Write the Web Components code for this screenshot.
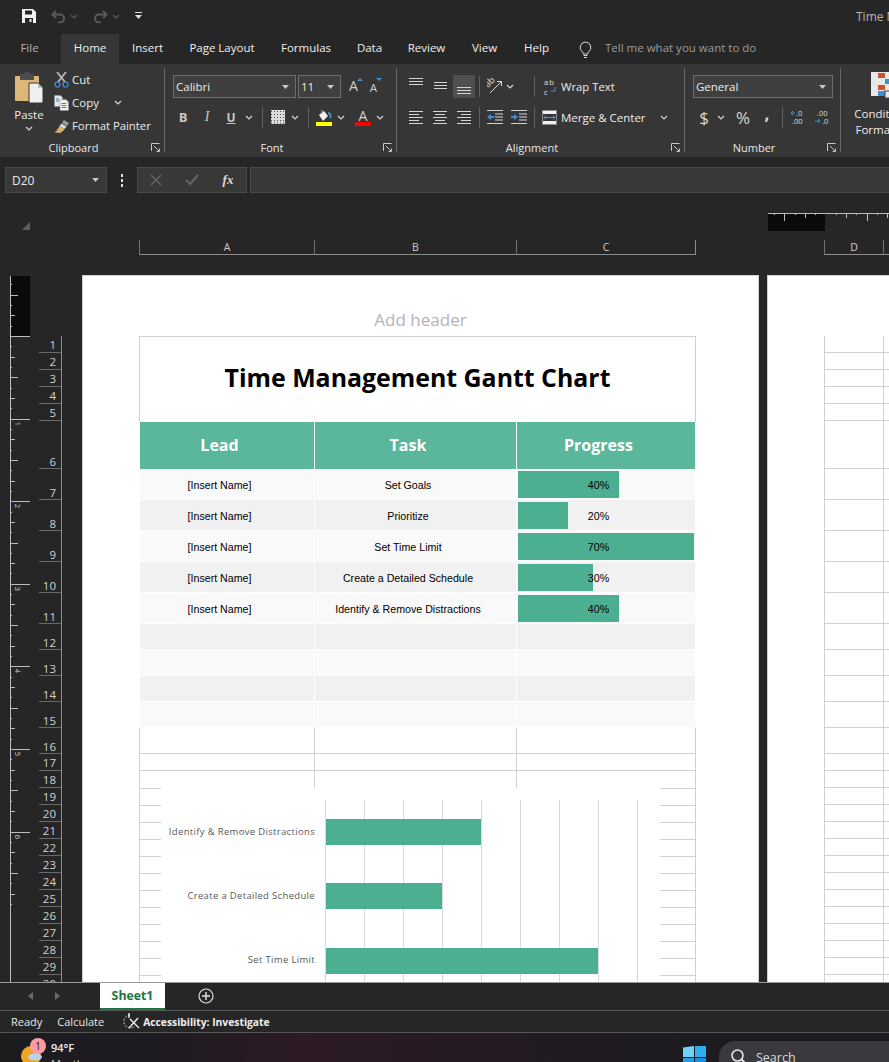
<!DOCTYPE html>
<html>
<head>
<meta charset="utf-8">
<title>Time Management Gantt Chart</title>
<style>
html, body { margin: 0; padding: 0; background: #262626; }
body { width: 889px; height: 1062px; overflow: hidden; display: flex; flex-direction: column; font-family: "Open Sans", "Liberation Sans", sans-serif; }
</style>
</head>
<body>
<x-titlebar></x-titlebar>
<x-tabs></x-tabs>
<x-ribbon></x-ribbon>
<x-formula-bar></x-formula-bar>
<x-workspace></x-workspace>
<x-sheet-tabs></x-sheet-tabs>
<x-status-bar></x-status-bar>
<x-taskbar></x-taskbar>

<script>
// row heights of the sheet, row 1 onwards
const ROWS = [17,17,17,17,17,48,31,31,31,31,31,26,26,26,26,26,17,17].concat(new Array(14).fill(17));

const line = (x1, y1, x2, y2, c, w) => `<line x1="${x1}" y1="${y1}" x2="${x2}" y2="${y2}" stroke="${c || '#d4d4d4'}" stroke-width="${w || 1}"/>`;
const lines3 = (ys, spans) => ys.map((y, i) => line(spans[i][0], y + .5, spans[i][1], y + .5)).join('');

const ICONS = {
  save: [16,16,`<path d="M1 1h11l3 3v11H1z" fill="#f2f2f2"/><rect x="4" y="2.5" width="7" height="4" fill="#262626"/><rect x="4" y="10" width="8" height="5" fill="#262626"/><rect x="8.5" y="11" width="2" height="3" fill="#f2f2f2"/>`],
  undo: [15,13,`<path d="M5 1 1.5 4.5 5 8M2 4.5h7a4 4 0 0 1 0 8H7" fill="none" stroke="#5a5a5a" stroke-width="2"/>`],
  redo: [15,13,`<path d="M10 1l3.500 3.500L10 8M13 4.500H6a4 4 0 0 0 0 8h2" fill="none" stroke="#5a5a5a" stroke-width="2"/>`],
  chev: [8,5,`<path d="M1 1l3 3 3-3" fill="none" stroke="#d6d6d6" stroke-width="1.2"/>`],
  chevdim: [8,5,`<path d="M1 1l3 3 3-3" fill="none" stroke="#5a5a5a" stroke-width="1.2"/>`],
  qat: [7,8,`<rect y="0" width="7" height="1" fill="#ddd"/><path d="M0 3h7L3.500 7z" fill="#ddd"/>`],
  down: [7,4,`<path d="M0 0h7L3.500 4z" fill="#c8c8c8"/>`],
  bulb: [13,17,`<path d="M6.500 1a5.500 5.500 0 0 0-3 10c.6.500.8 1.300.8 2h4.400c0-.7.2-1.500.8-2a5.500 5.500 0 0 0-3-10z" fill="none" stroke="#d6d6d6"/><path d="M4.500 14.500h4M5 16.500h3" stroke="#d6d6d6"/>`],
  paste: [28,31,`<rect x="0" y="4" width="24" height="25" rx="1" fill="#dbb878"/><rect x="5" y="2" width="14" height="6" fill="#4c4c4c"/><rect x="9.500" y="0" width="5" height="4" rx="1" fill="#4c4c4c"/><path d="M14 11h9l5 5v15H14z" fill="#f0f0f0" stroke="#363636"/><path d="M23 11v5h5" fill="#bdbdbd"/>`],
  cut: [15,16,`<path d="M3 0l8 10M12 0L4 10" stroke="#b8b8b8" stroke-width="1.800"/><circle cx="3.500" cy="12.500" r="2.500" fill="none" stroke="#4a90d9" stroke-width="1.200"/><circle cx="11.500" cy="12.500" r="2.500" fill="none" stroke="#4a90d9" stroke-width="1.200"/>`],
  copy: [15,16,`<path d="M.5.500h6l2 2v9h-8z" fill="#e6e6e6" stroke="#999" stroke-width=".5"/><path d="M6 4.500h6l2.500 2.500v8.500H6z" fill="#f4f4f4" stroke="#888" stroke-width=".5"/><path d="M7.500 8.500h5M7.500 10.500h5M7.500 12.500h5M2 4h3M2 6h3" stroke="#3d84cc"/>`],
  painter: [16,14,`<path d="M10 1l5 3-2 3-5-3z" fill="#9a9a9a"/><path d="M7.500 4.500l5 3-2 2.500-5-3z" fill="#d7d7d7"/><path d="M5.500 7l5 3c-1 2-3 3.500-5 4l-5-.5C2 12 3 12 3.500 11 2.500 11 2 11 1.500 11c2 0 3-2 4-4z" fill="#d9b06a"/>`],
  grow: [6,3,`<path d="M0 3l3-3 3 3z" fill="#3f8fd6"/>`],
  shrink: [6,3,`<path d="M0 0l3 3 3-3z" fill="#3f8fd6"/>`],
  launcher: [9,9,`<path d="M.5 8V.5H8.500M5.500 8.500H8.500V5.500M3 3l5 5" fill="none" stroke="#c8c8c8"/>`],
  borders: [14,14,`<rect width="14" height="14" fill="#dcdcdc"/>` + [1.5,4.5,7.5,10.5,13].map(v => `<path d="M0 ${v}h14" stroke="#4a4a4a" stroke-dasharray="1 2"/>`).join('')],
  fill: [16,17,`<path d="M3 6l5-4 4 5-5 5z" fill="#f2f2f2"/><path d="M6 1v4" stroke="#bbb"/><path d="M12 4c3 0 3 4 2 5" fill="none" stroke="#3f8fd6" stroke-width="2"/><rect y="13" width="16" height="4" fill="#ffff00"/>`],
  aligntop: [14,23,lines3([3,6,9],[[0,14],[0,14],[0,14]])],
  alignmid: [14,23,lines3([7,10,13],[[1,14],[1,14],[1,14]])],
  alignbot: [14,23,lines3([12,15,18],[[0,14],[0,14],[0,14]])],
  left: [14,14,lines3([1,4,7,10,13],[[0,14],[0,10],[0,14],[0,10],[0,14]])],
  center: [14,14,lines3([1,4,7,10,13],[[0,14],[2,12],[0,14],[2,12],[0,14]])],
  right: [14,14,lines3([1,4,7,10,13],[[0,14],[4,14],[0,14],[4,14],[0,14]])],
  orient: [17,17,`<text transform="translate(1 10) rotate(-45)" font-family="Open Sans" font-size="9" fill="#dcdcdc">ab</text><path d="M3 15 14 4" stroke="#dcdcdc"/><path d="M10 3.500h4.500V8" fill="none" stroke="#dcdcdc"/>`],
  indentl: [16,14,lines3([0,13],[[0,16],[0,16]]) + line(8,4,16,4) + line(8,7,16,7) + line(8,10,16,10) + `<path d="M0 7l4-3v2h3v2H4v2z" fill="#3f8fd6"/>`],
  indentr: [16,14,lines3([0,13],[[0,16],[0,16]]) + line(8,4,16,4) + line(8,7,16,7) + line(8,10,16,10) + `<path d="M7 7L3 4v2H0v2h3v2z" fill="#3f8fd6"/>`],
  wrap: [12,18,`<text x="0" y="7" font-family="Open Sans" font-size="7.500" letter-spacing="1" fill="#e0e0e0">ab</text><text x="0" y="16.500" font-family="Open Sans" font-size="7.500" fill="#e0e0e0">c</text><path d="M11 9v4H7" fill="none" stroke="#3f8fd6"/>`],
  merge: [15,15,`<rect x=".5" y=".5" width="14" height="14" fill="#f0f0f0" stroke="#8a8a8a"/><rect x="1" y="4" width="13" height="7" fill="#363636"/><path d="M2 7.500h11M4 5.500l-2 2 2 2M11 5.500l2 2-2 2" fill="none" stroke="#4a9be0"/>`],
  decl: [16,17,`<text x="6" y="6.500" font-family="Open Sans" font-size="7.500" fill="#dcdcdc">.0</text><text x="2" y="15" font-family="Open Sans" font-size="7.500" fill="#dcdcdc">.00</text><path d="M5 4H1M3 2L1 4l2 2" fill="none" stroke="#3f8fd6"/>`],
  decr: [16,17,`<text x="3" y="6.500" font-family="Open Sans" font-size="7.500" fill="#dcdcdc">.00</text><text x="8" y="15" font-family="Open Sans" font-size="7.500" fill="#dcdcdc">.0</text><path d="M1 12h5M4 10l2 2-2 2" fill="none" stroke="#3f8fd6"/>`],
  cond: [28,26,`<rect width="28" height="24" fill="#e8e8e8"/><rect x="7" y="1" width="7" height="5" fill="#d0532c"/><rect x="14" y="7" width="14" height="5" fill="#3f8fd6"/><rect x="7" y="13" width="7" height="5" fill="#d0532c"/><rect x="7" y="19" width="7" height="5" fill="#3f8fd6"/><rect x="14" y="19" width="14" height="7" fill="#e8e8e8" stroke="#444"/>`],
  cross: [12,12,`<path d="M1 1l10 10M11 1 1 11" stroke="#666" stroke-width="1.500"/>`],
  check: [14,12,`<path d="M1 6l4 4 8-9" fill="none" stroke="#666" stroke-width="2"/>`],
  corner: [8,8,`<path d="M8 0v8H0z" fill="#5c5c5c"/>`],
  plus: [16,16,`<circle cx="8" cy="8" r="7" fill="none" stroke="#e0e0e0" stroke-width="1.200"/><path d="M4 8h8M8 4v8" stroke="#e0e0e0" stroke-width="1.500"/>`],
  navl: [5,8,`<path d="M5 0v8L0 4z" fill="#6a6a6a"/>`],
  navr: [5,8,`<path d="M0 0v8l5-4z" fill="#6a6a6a"/>`],
  access: [17,17,`<path d="M7 2a6.500 6.500 0 1 0 5 11" fill="none" stroke="#ddd" stroke-dasharray="2 1.500"/><path d="M6 0v5M7 6l9 9M15 5l-9 10" stroke="#eee" stroke-width="1.400" fill="none"/>`],
  weather: [22,17,`<circle cx="10" cy="11" r="10" fill="#eda522"/><ellipse cx="14" cy="12" rx="7" ry="3.500" fill="#bcd3ee"/>`],
  windows: [23,17,`<path d="M0 1.500 11 0v11H0z" fill="#6fd3f7"/><path d="M12 0l11 0v11H12z" fill="#2fb0ee"/><path d="M0 12h11v5H0z" fill="#1a9fe8"/><path d="M12 12h11v5H12z" fill="#1a8fe0"/>`],
  search: [16,16,`<circle cx="6.500" cy="6.500" r="5.500" fill="none" stroke="#e4e4e4" stroke-width="1.600"/><path d="M10.500 10.500 15 15" stroke="#e4e4e4" stroke-width="2"/>`]
};

class XIcon extends HTMLElement {
  connectedCallback() {
    const [w, h, body] = ICONS[this.getAttribute("name")];
    if (this.shadowRoot) return;
    this.attachShadow({ mode: "open" });
    this.shadowRoot.innerHTML = `<style>:host{display:inline-flex;flex:none}svg{display:block}</style>
      <svg width="${w}" height="${h}" viewBox="0 0 ${w} ${h}">${body}</svg>`;
  }
}

class XTitlebar extends HTMLElement {
  constructor() {
    super();
    this.attachShadow({ mode: "open" });
    this.shadowRoot.innerHTML = `<style>
      :host { display: flex; align-items: center; height: 34px; flex: none; background: #262626; padding: 0 0 2px 21px; box-sizing: border-box; position: relative; color: #b5b5b5; font-size: 12px; white-space: nowrap; }
      .sp { display: inline-block; }
      .t { margin-left: auto; width: 33px; overflow: hidden; }
    </style>
    <x-icon name="save"></x-icon><span class="sp" style="width:14px"></span>
    <x-icon name="undo"></x-icon><span class="sp" style="width:4px"></span><x-icon name="chevdim"></x-icon><span class="sp" style="width:15px"></span>
    <x-icon name="redo"></x-icon><span class="sp" style="width:4px"></span><x-icon name="chevdim"></x-icon><span class="sp" style="width:15px"></span>
    <x-icon name="qat"></x-icon>
    <span class="t">Time Management</span>`;
  }
}

class XTabs extends HTMLElement {
  constructor() {
    super();
    this.attachShadow({ mode: "open" });
    const tabs = [["Home",58],["Insert",57],["Page Layout",92],["Formulas",76],["Data",51],["Review",63],["View",53],["Help",51]];
    this.shadowRoot.innerHTML = `<style>
      :host { display: flex; height: 30px; flex: none; background: #262626; color: #f0f0f0; font-size: 11.5px; white-space: nowrap; }
      div { display: flex; align-items: center; justify-content: center; padding-bottom: 3px; box-sizing: border-box; }
      .file { width: 43px; margin: 0 10px 0 8px; color: #b5b5b5; }
      .on { background: #363636; }
      .bulb { margin: 0 13px 0 17px; padding-bottom: 0; }
      .tell { color: #9c9c9c; }
    </style>
    <div class="file">File</div>
    ${tabs.map((t, i) => `<div class="${i ? '' : 'on'}" style="width:${t[1]}px">${t[0]}</div>`).join('')}
    <div class="bulb"><x-icon name="bulb"></x-icon></div>
    <div class="tell">Tell me what you want to do</div>`;
  }
}

class XRibbonGroup extends HTMLElement {
  constructor() {
    super();
    this.attachShadow({ mode: "open" });
    const launcher = this.hasAttribute("launcher") ? `<x-icon class="ln" name="launcher"></x-icon>` : '';
    this.shadowRoot.innerHTML = `<style>
      :host { display: flex; flex-direction: column; flex: none; box-sizing: border-box; height: 93px; width: var(--w); position: relative; }
      :host::after { content: ""; position: absolute; right: 0; top: 4px; bottom: 5px; width: 1px; background: #6a6a6a; }
      .body { height: 75px; }
      .foot { height: 18px; display: flex; align-items: center; justify-content: center; font-size: 11px; color: #e6e6e6; position: relative; padding: 0 18px 1px 0; box-sizing: border-box; }
      .ln { position: absolute; right: 5px; top: 4px; }
    </style>
    <div class="body"><slot></slot></div>
    <div class="foot">${this.getAttribute("label") || ''}${launcher}</div>`;
  }
}

class XRibbon extends HTMLElement {
  constructor() {
    super();
    this.attachShadow({ mode: "open" });
    const ic = (n, st) => `<x-icon name="${n}"${st ? ` style="${st}"` : ''}></x-icon>`;
    const sep = (ml, mr) => `<i class="sep" style="margin:0 ${mr}px 0 ${ml}px"></i>`;
    const cell = (w, inner, st) => `<span class="cell" style="width:${w}px;${st || ''}">${inner}</span>`;
    this.shadowRoot.innerHTML = `<style>
      :host { display: flex; height: 93px; flex: none; background: #363636; color: #ececec; font-size: 11.5px; white-space: nowrap; overflow: hidden; }
      .row { display: flex; align-items: center; height: 23px; }
      .cell { display: inline-flex; align-items: center; justify-content: center; flex: none; }
      .sep { display: block; width: 1px; height: 21px; background: #606060; flex: none; }
      .combo { display: flex; align-items: center; box-sizing: border-box; height: 23px; border: 1px solid #6e6e6e; background: #3f3f3f; padding: 0 6px 0 2px; justify-content: space-between; flex: none; font-size: 11.5px; }
      .clip { display: flex; padding: 3px 0 0 0; }
      .paste { width: 50px; margin-left: 4px; display: flex; flex-direction: column; align-items: center; padding-top: 5px; }
      .paste span { margin-top: 2px; height: 18px; display: flex; align-items: center; }
      .stack { display: flex; flex-direction: column; }
      .stack .row { gap: 3px; }
      .b { font: bold 13px "Open Sans", sans-serif; color: #c8c8c8; }
      .i { font: italic 14px "Liberation Serif", serif; color: #c8c8c8; }
      .u { font: bold 12px "Open Sans", sans-serif; color: #c8c8c8; text-decoration: underline; }
      .a { font: 14px "Open Sans", sans-serif; color: #d0d0d0; }
      .grow { display: flex; align-items: flex-end; height: 17px; flex: none; }
      .grow x-icon { align-self: flex-start; margin-left: -1px; }
      .on { background: #4f4f4f; height: 23px; }
      .big { font: 17px "Open Sans", sans-serif; color: #d8d8d8; }
      .cond { width: 88px; display: flex; flex-direction: column; align-items: center; padding-top: 8px; font-size: 11.5px; line-height: 16px; }
      .cond x-icon { margin-bottom: 8px; }
      .pad { padding-top: 11px; }
      .r2 { margin-top: 7px; height: 24px; }
      .ul { display: flex; flex-direction: column; align-items: center; line-height: 14px; }
      .bar { width: 16px; height: 4px; background: #ff0000; }
    </style>
    <x-ribbon-group label="Clipboard" launcher style="--w:165px">
      <div class="clip">
        <div class="paste">${ic('paste')}<span>Paste</span>${ic('chev','margin-top:3px')}</div>
        <div class="stack">
          <div class="row" style="padding-top:1px">${cell(15, ic('cut'))}<span>Cut</span></div>
          <div class="row">${cell(15, ic('copy'))}<span>Copy</span><span class="cell" style="margin-left:12px;width:8px">${ic('chev')}</span></div>
          <div class="row">${cell(15, ic('painter'))}<span style="font-size:11.300px">Format Painter</span></div>
        </div>
      </div>
    </x-ribbon-group>

    <x-ribbon-group label="Font" launcher style="--w:232px">
      <div class="pad" style="padding-left:8px">
        <div class="row">
          <div class="combo" style="width:123px"><span>Calibri</span>${ic('down')}</div>
          <div class="combo" style="width:43px;margin-left:2px"><span style="color:#f2eec0">11</span>${ic('down')}</div>
          <span class="grow" style="margin-left:8px"><span class="a">A</span>${ic('grow')}</span>
          <span class="grow" style="margin-left:7px"><span class="a" style="font-size:11.500px">A</span>${ic('shrink')}</span>
        </div>
        <div class="row r2" style="margin-left:-2px">
          ${cell(24,'<span class="b">B</span>')}${cell(24,'<span class="i">I</span>')}${cell(24,'<span class="u">U</span>')}${cell(12,ic('chev'))}
          ${sep(7,8)}${ic('borders')}${cell(12,ic('chev'),'margin-left:4px')}
          ${sep(7,7)}${ic('fill')}${cell(12,ic('chev'),'margin-left:3px')}
          <span class="ul" style="margin-left:8px;width:16px"><span class="a" style="font-size:14px;line-height:13px">A</span><span class="bar"></span></span>${cell(12,ic('chev'),'margin-left:3px')}
        </div>
      </div>
    </x-ribbon-group>

    <x-ribbon-group label="Alignment" launcher style="--w:288px">
      <div class="pad" style="padding-left:7px">
        <div class="row">
          ${cell(24,ic('aligntop'))}${cell(24,ic('alignmid'))}<span class="cell on" style="width:22px;margin:0 1px">${ic('alignbot')}</span>
          ${sep(3,7)}${ic('orient')}${cell(12,ic('chev'))}
          ${sep(18,9)}${ic('wrap')}<span style="margin-left:5px;font-size:11.300px">Wrap Text</span>
        </div>
        <div class="row r2">
          ${cell(24,ic('left'))}${cell(24,ic('center'))}${cell(24,ic('right'))}
          ${sep(3,7)}${ic('indentl')}<span style="width:8px"></span>${ic('indentr')}
          ${sep(7,7)}${ic('merge')}<span style="margin-left:4px;width:86px">Merge &amp; Center</span>${cell(12,ic('chev'),'margin-left:11px')}
        </div>
      </div>
    </x-ribbon-group>

    <x-ribbon-group label="Number" launcher style="--w:156px">
      <div class="pad" style="padding-left:8px">
        <div class="row"><div class="combo" style="width:140px"><span>General</span>${ic('down')}</div></div>
        <div class="row r2">
          ${cell(22,'<span class="big">$</span>')}${cell(12,ic('chev'))}
          ${cell(32,'<span class="big">%</span>')}
          ${cell(16,'<span class="big" style="font-weight:700;margin-top:-8px">,</span>')}
          ${sep(7,7)}${ic('decl')}<span style="width:8px"></span>${ic('decr')}
        </div>
      </div>
    </x-ribbon-group>

    <div class="cond" style="flex:none">${ic('cond')}<span>Conditional</span><span>Formatting</span></div>`;
  }
}

class XFormulaBar extends HTMLElement {
  constructor() {
    super();
    this.attachShadow({ mode: "open" });
    this.shadowRoot.innerHTML = `<style>
      :host { display: flex; align-items: stretch; height: 26px; flex: none; margin: 10px 0 0 0; padding-left: 5px; background: #262626; color: #e8e8e8; font-size: 12px; }
      .box { box-sizing: border-box; background: #383838; border: 1px solid #484848; display: flex; align-items: center; }
      .name { width: 102px; padding: 0 7px 0 6px; justify-content: space-between; }
      .dots { width: 30px; display: flex; flex-direction: column; align-items: center; justify-content: center; gap: 2px; }
      .dots i { width: 2px; height: 3px; background: #e0e0e0; display: block; }
      .btns { width: 110px; }
      .btns span { width: 36px; display: flex; justify-content: center; align-items: center; }
      .fx { font: italic bold 13px "Liberation Serif", serif; color: #dcdcdc; }
      .input { flex: 1; margin-left: 3px; border-right: none; }
    </style>
    <div class="box name"><span>D20</span><x-icon name="down"></x-icon></div>
    <div class="dots"><i></i><i></i><i></i></div>
    <div class="box btns"><span><x-icon name="cross"></x-icon></span><span><x-icon name="check"></x-icon></span><span class="fx">fx</span></div>
    <div class="box input"></div>`;
  }
}

class XTopRuler extends HTMLElement {
  constructor() {
    super();
    this.attachShadow({ mode: "open" });
    let t = '';
    for (let x = 774, i = 1; x < 889; x += 10.3, i++) {
      if (Math.abs(x - 825) < 3) continue;
      const major = [784, 866].some(v => Math.abs(x - v) < 3);
      t += line(Math.round(x - 768) + .5, 0, Math.round(x - 768) + .5, major ? 8 : (i % 2 ? 2 : 5), '#bdbdbd');
    }
    this.shadowRoot.innerHTML = `<style>:host{display:block;height:18px;margin-left:768px}svg{display:block}</style>
      <svg width="121" height="18"><rect width="57" height="18" fill="#0a0a0a"/>${line(0,.5,121,.5,'#bdbdbd')}${t}</svg>`;
  }
}

class XColHeaders extends HTMLElement {
  constructor() {
    super();
    this.attachShadow({ mode: "open" });
    const cols = [["A",175,0],["B",202,0],["C",180,128],["D",59,0],["",10,0]];
    this.shadowRoot.innerHTML = `<style>
      :host { display: flex; height: 15px; margin-left: 139px; color: #cfcfcf; font-size: 10.500px; }
      div { box-sizing: border-box; flex: none; height: 15px; border-bottom: 1px solid #8c8c8c; border-left: 1px solid #6f6f6f; display: flex; align-items: center; justify-content: center; padding-bottom: 1px; }
      .end { border-right: 1px solid #8c8c8c; }
    </style>
    ${cols.map((c, i) => `<div class="${i == 2 ? 'end' : ''}" style="width:${c[1]}px;margin-right:${c[2]}px">${c[0]}</div>`).join('')}`;
  }
}

class XVRuler extends HTMLElement {
  constructor() {
    super();
    this.attachShadow({ mode: "open" });
    // inches start at row 1, every 82.6px; small ticks every eighth of that
    const zero = 60;
    let t = '';
    for (let i = -5; i < 56; i++) {
      const y = Math.round(zero + i * 82.6 / 8) + .5;
      if (i % 8 == 0) {
        t += line(0, y, 20, y, '#bdbdbd');
        if (i > 0) t += `<text transform="translate(5 ${y + 2}) rotate(90)" font-family="Open Sans" font-size="8" fill="#d0d0d0">${i / 8}</text>`;
      } else if (i % 4 == 0) t += line(0, y, 8, y, '#bdbdbd');
      else if (i % 2 == 0) t += line(0, y, 5, y, '#bdbdbd');
      else t += line(0, y, 2, y, '#bdbdbd');
    }
    this.shadowRoot.innerHTML = `<style>:host{display:block;width:20px;flex:none;margin-top:1px}svg{display:block}</style>
      <svg width="20" height="706"><rect width="20" height="61" fill="#0a0a0a"/>${line(.5,0,.5,706,'#bdbdbd')}${t}</svg>`;
  }
}

class XRowHeaders extends HTMLElement {
  constructor() {
    super();
    this.attachShadow({ mode: "open" });
    this.shadowRoot.innerHTML = `<style>
      :host { display: block; width: 23px; flex: none; margin: 61px 0 0 9px; border-right: 1px solid #8c8c8c; box-sizing: border-box; color: #d0d0d0; font-size: 11.500px; }
      div { box-sizing: border-box; border-bottom: 1px solid #6a6a6a; display: flex; align-items: flex-end; justify-content: flex-end; padding-right: 5px; line-height: 13px; }
      div:first-child { border-top: 1px solid #8c8c8c; }
    </style>
    ${ROWS.map((h, i) => `<div style="height:${h}px;${h == 17 ? 'line-height:15px' : ''}">${i + 1}</div>`).join('')}`;
  }
}

class XGanttBar extends HTMLElement {
  constructor() {
    super();
    this.attachShadow({ mode: "open" });
    this.shadowRoot.innerHTML = `<style>
      :host { display: grid; grid-template-columns: 154px 10px 335px; height: 64.300px; align-items: center; }
      .lb { text-align: right; font-size: 9.500px; letter-spacing: .33px; color: #595959; white-space: nowrap; padding-bottom: 2px; }
      .bar { height: 26px; background: #4caf91; margin-left: 1px; width: var(--v); }
    </style>
    <div class="lb"><slot></slot></div><div></div><div class="bar"></div>`;
  }
}

class XDataRow extends HTMLElement {
  constructor() {
    super();
    this.attachShadow({ mode: "open" });
    const a = n => this.getAttribute(n) || '';
    const bar = a("bar") ? `<div class="bar" style="width:${a("bar")}px"></div>` : '';
    this.shadowRoot.innerHTML = `<style>
      :host { display: grid; grid-template-columns: 175px 202px 178px; font: 10.650px "Liberation Sans", sans-serif; color: #000; }
      .c { box-sizing: border-box; border-right: 1px solid #fff; border-bottom: 1px solid #fff; display: grid; align-items: center; justify-items: center; padding: 1px 15px 0 0; background: var(--bg); height: var(--h); }
      .c:last-child { border-right: none; padding-right: 0; }
      .p { justify-items: start; padding: 0; }
      .p > * { grid-area: 1 / 1; }
      .bar { height: 27px; margin-left: 1px; align-self: start; margin-top: 2px; background: #4caf91; }
      .v { justify-self: stretch; text-align: center; padding: 1px 15px 0 0; }
    </style>
    <div class="c">${a("lead")}</div>
    <div class="c">${a("task")}</div>
    <div class="c p">${bar}<span class="v">${a("pct")}</span></div>`;
  }
}

class XPageOne extends HTMLElement {
  constructor() {
    super();
    this.attachShadow({ mode: "open" });
    this.shadowRoot.innerHTML = `<style>
      :host { display: block; box-sizing: border-box; width: 677px; height: 707px; background: #fff; border: 1px solid #d0d0d0; border-bottom: none; overflow: hidden; flex: none; padding-left: 56px; margin-left: 1px; }
      .add { height: 60px; width: 557px; box-sizing: border-box; padding: 33px 0 0 6px; color: #b4b4b4; font: 17px "Open Sans", sans-serif; text-align: center; line-height: 22px; }
      .title { box-sizing: border-box; width: 557px; height: 86px; border: 1px solid #d0d0d0; border-bottom: none; display: flex; align-items: center; justify-content: center; padding: 0 0 6px 0; font: 700 24.900px "Open Sans", sans-serif; color: #000; }
      .tbl { margin-left: 1px; width: 555px; }
      .head { display: grid; grid-template-columns: 175px 202px 178px; height: 47px; background: #5ab79b; color: #fff; font: 700 16px "Open Sans", sans-serif; }
      .head div { display: flex; align-items: center; justify-content: center; padding: 0 15px 2px 0; border-right: 1px solid #fff; box-sizing: border-box; }
      .head div:last-child { border-right: none; }
      .lower { display: grid; width: 557px; grid-template-columns: 175px 202px 180px; }
      .lower div { box-sizing: border-box; border-left: 1px solid #d0d0d0; border-bottom: 1px solid #d0d0d0; }
      .lower div:nth-child(3n) { border-right: 1px solid #d0d0d0; }
      .lower .last { border-bottom: none; }
      .chart { display: grid; width: 557px; grid-template-columns: 22px 499px 36px; height: 194px; }
      .stub { background: repeating-linear-gradient(to bottom, #d0d0d0 0 1px, #fff 1px 17px); }
      .s1 { border-left: 1px solid #d0d0d0; }
      .s2 { border-right: 1px solid #d0d0d0; }
      .plot { background: #fff; padding-top: 12px; box-sizing: border-box; overflow: hidden; }
      .grid { height: 200px; margin-left: 0; background: repeating-linear-gradient(to right, #d9d9d9 0 1px, transparent 1px 39px) 164px 0 / 335px 100% no-repeat; }
    </style>
    <div class="add">Add header</div>
    <div class="title">Time Management Gantt Chart</div>
    <div class="tbl">
      <div class="head"><div>Lead</div><div>Task</div><div>Progress</div></div>
      <x-data-row style="--bg:#f9f9f9;--h:31px" lead="[Insert Name]" task="Set Goals" pct="40%" bar="101"></x-data-row>
      <x-data-row style="--bg:#f1f1f1;--h:31px" lead="[Insert Name]" task="Prioritize" pct="20%" bar="50"></x-data-row>
      <x-data-row style="--bg:#f9f9f9;--h:31px" lead="[Insert Name]" task="Set Time Limit" pct="70%" bar="176"></x-data-row>
      <x-data-row style="--bg:#f1f1f1;--h:31px" lead="[Insert Name]" task="Create a Detailed Schedule" pct="30%" bar="75"></x-data-row>
      <x-data-row style="--bg:#f9f9f9;--h:31px" lead="[Insert Name]" task="Identify &amp; Remove Distractions" pct="40%" bar="101"></x-data-row>
      <x-data-row style="--bg:#f1f1f1;--h:26px"></x-data-row>
      <x-data-row style="--bg:#f9f9f9;--h:26px"></x-data-row>
      <x-data-row style="--bg:#f1f1f1;--h:26px"></x-data-row>
      <x-data-row style="--bg:#f9f9f9;--h:26px"></x-data-row>
    </div>
    <div class="lower">
      <div style="height:26px"></div><div></div><div></div>
      <div style="height:17px"></div><div></div><div></div>
      <div class="last" style="height:17px"></div><div class="last"></div><div class="last"></div>
    </div>
    <div class="chart">
      <div class="stub s1"></div>
      <div class="plot"><div class="grid">
        <x-gantt-bar style="--v:155px">Identify &amp; Remove Distractions</x-gantt-bar>
        <x-gantt-bar style="--v:116px">Create a Detailed Schedule</x-gantt-bar>
        <x-gantt-bar style="--v:272px">Set Time Limit</x-gantt-bar>
      </div></div>
      <div class="stub s2"></div>
    </div>`;
  }
}

class XPageTwo extends HTMLElement {
  constructor() {
    super();
    this.attachShadow({ mode: "open" });
    this.shadowRoot.innerHTML = `<style>
      :host { display: block; box-sizing: border-box; width: 122px; height: 707px; background: #fff; border: 1px solid #d0d0d0; border-width: 1px 0 0 1px; overflow: hidden; flex: none; margin-left: 8px; padding: 60px 0 0 56px; }
      .r { box-sizing: border-box; border-bottom: 1px solid #d0d0d0; background: linear-gradient(#d0d0d0,#d0d0d0) 0 0 / 1px 100% no-repeat, linear-gradient(#d0d0d0,#d0d0d0) 59px 0 / 1px 100% no-repeat; }
      .r:first-child { border-top: 1px solid #d0d0d0; }
    </style>
    ${ROWS.map(h => `<div class="r" style="height:${h}px"></div>`).join('')}`;
  }
}

class XWorkspace extends HTMLElement {
  constructor() {
    super();
    this.attachShadow({ mode: "open" });
    this.shadowRoot.innerHTML = `<style>
      :host { display: block; height: 789px; flex: none; background: #262626; overflow: hidden; padding-top: 20px; box-sizing: border-box; position: relative; }
      .corner { height: 0; padding-left: 22px; }
      .corner x-icon { margin-top: 5px; }
      .head { margin-top: 9px; }
      .main { display: flex; margin-top: 20px; padding-left: 10px; align-items: flex-start; }
      .gut { display: flex; width: 71px; flex: none; }
    </style>
    <div class="corner"><x-icon name="corner"></x-icon></div>
    <x-top-ruler></x-top-ruler>
    <div class="head"><x-col-headers></x-col-headers></div>
    <div class="main">
      <div class="gut"><x-v-ruler></x-v-ruler><x-row-headers></x-row-headers></div>
      <x-page-one></x-page-one>
      <x-page-two></x-page-two>
    </div>`;
  }
}

class XSheetTabs extends HTMLElement {
  constructor() {
    super();
    this.attachShadow({ mode: "open" });
    this.shadowRoot.innerHTML = `<style>
      :host { display: flex; align-items: center; height: 28px; flex: none; background: #262626; border-top: 1px solid #9a9a9a; box-sizing: border-box; padding: 0 0 2px 28px; position: relative; }
      .tab { box-sizing: border-box; width: 65px; height: 27px; background: #fff; border-bottom: 2px solid #217346; color: #217346; font: 700 12.300px "Open Sans", sans-serif; display: flex; align-items: center; justify-content: center; margin: 0 0 -2px 40px; padding-bottom: 1px; flex: none; }
      .plus { margin-left: 33px; }
      .n2 { margin-left: 22px; }
    </style>
    <x-icon name="navl"></x-icon><x-icon class="n2" name="navr"></x-icon>
    <div class="tab">Sheet1</div>
    <x-icon class="plus" name="plus"></x-icon>`;
  }
}

class XStatusBar extends HTMLElement {
  constructor() {
    super();
    this.attachShadow({ mode: "open" });
    this.shadowRoot.innerHTML = `<style>
      :host { display: flex; align-items: center; height: 23px; flex: none; background: #262626; border-top: 1px solid #555; border-bottom: 1px solid #555; box-sizing: border-box; padding-left: 11px; color: #e8e8e8; font-size: 11px; white-space: nowrap; }
      .c { margin-left: 15px; }
      x-icon { margin: 0 3px 0 19px; }
      b { font-weight: 700; color: #f0f0f0; font-size: 10.300px; }
    </style>
    <span>Ready</span><span class="c">Calculate</span><x-icon name="access"></x-icon><b>Accessibility: Investigate</b>`;
  }
}

class XTaskbar extends HTMLElement {
  constructor() {
    super();
    this.attachShadow({ mode: "open" });
    this.shadowRoot.innerHTML = `<style>
      :host { display: flex; height: 30px; flex: none; overflow: hidden; box-sizing: border-box; padding-left: 21px; color: #f0f0f0; font-size: 11px; white-space: nowrap;
        background: linear-gradient(to right, #1c1c1f 0, #1e1b20 150px, #2c1a24 300px, #241a22 500px, #1c1c20 680px, #1c1c20 100%); }
      .wx { position: relative; width: 30px; flex: none; padding-top: 12px; box-sizing: border-box; }
      .badge { position: absolute; left: 9px; top: 5px; width: 16px; height: 16px; border-radius: 50%; background: #ff9aa2; color: #222; font-size: 10.500px; display: flex; align-items: center; justify-content: center; }
      .temp { line-height: 14px; padding-top: 8px; font-size: 11px; }
      .temp div:last-child { color: #c4c4c4; margin-top: 2px; }
      .win { margin-left: 598px; padding-top: 13px; flex: none; }
      .search { margin: 8px 0 0 13px; width: 200px; height: 40px; background: #3a3a3e; border-radius: 16px; display: flex; align-items: flex-start; padding: 8px 0 0 12px; gap: 9px; color: #d8d8d8; font-size: 12.500px; flex: none; box-sizing: border-box; }
    </style>
    <div class="wx"><x-icon name="weather"></x-icon><span class="badge">1</span></div>
    <div class="temp"><div><b style="font-weight:600">94°F</b></div><div>Mostly</div></div>
    <div class="win"><x-icon name="windows"></x-icon></div>
    <div class="search"><x-icon name="search"></x-icon><span>Search</span></div>`;
  }
}

customElements.define("x-icon", XIcon);
customElements.define("x-titlebar", XTitlebar);
customElements.define("x-tabs", XTabs);
customElements.define("x-ribbon-group", XRibbonGroup);
customElements.define("x-ribbon", XRibbon);
customElements.define("x-formula-bar", XFormulaBar);
customElements.define("x-top-ruler", XTopRuler);
customElements.define("x-col-headers", XColHeaders);
customElements.define("x-v-ruler", XVRuler);
customElements.define("x-row-headers", XRowHeaders);
customElements.define("x-gantt-bar", XGanttBar);
customElements.define("x-data-row", XDataRow);
customElements.define("x-page-one", XPageOne);
customElements.define("x-page-two", XPageTwo);
customElements.define("x-workspace", XWorkspace);
customElements.define("x-sheet-tabs", XSheetTabs);
customElements.define("x-status-bar", XStatusBar);
customElements.define("x-taskbar", XTaskbar);
</script>
</body>
</html>
